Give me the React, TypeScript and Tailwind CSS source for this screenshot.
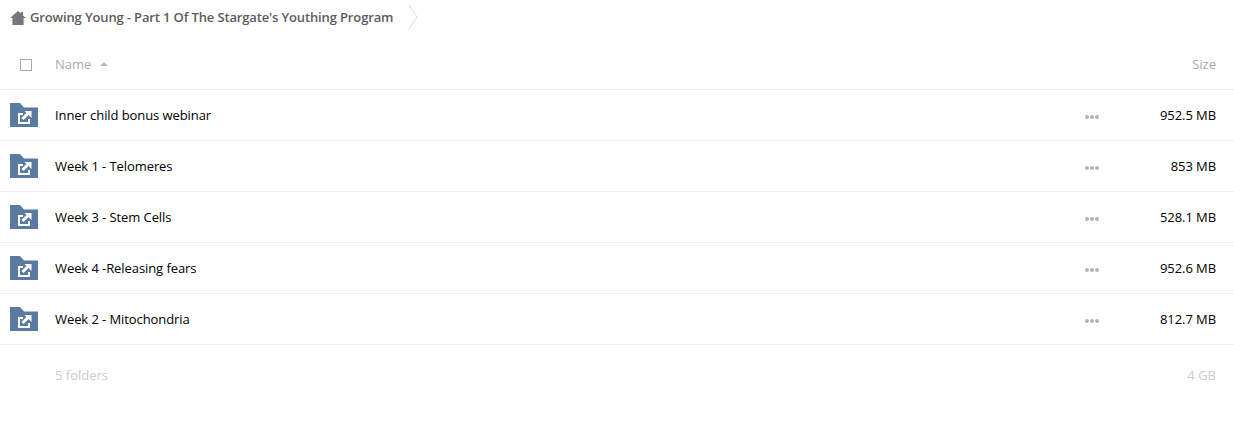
const rows = [
  ["Inner child bonus webinar", "952.5 MB"],
  ["Week 1 - Telomeres", "853 MB"],
  ["Week 3 - Stem Cells", "528.1 MB"],
  ["Week 4 -Releasing fears", "952.6 MB"],
  ["Week 2 - Mitochondria", "812.7 MB"],
];

function Folder() {
  return (
    <svg width="28" height="24" viewBox="0 0 28 24" className="block shrink-0">
      <path d="M0 0H10L14 4.5H28V24H0Z" fill="#5b7aa1" />
      <path d="M13 11H9V20H19V16" fill="none" stroke="#fff" strokeWidth="2" />
      <path d="M12.5 16L18 10.5" stroke="#fff" strokeWidth="3" />
      <path d="M14.5 8H21.5V15Z" fill="#fff" />
    </svg>
  );
}

function Dots() {
  return (
    <svg width="14" height="4" viewBox="0 0 14 4" className="block">
      <circle cx="2" cy="2" r="2" fill="#b3b3b3" />
      <circle cx="7" cy="2" r="2" fill="#b3b3b3" />
      <circle cx="12" cy="2" r="2" fill="#b3b3b3" />
    </svg>
  );
}

export default function App() {
  return (
    <div className="w-[1234px] h-[426px] bg-white font-['Open_Sans',sans-serif] text-[13px] overflow-hidden">
      <div className="h-[35px] flex items-center pl-[10px]">
        <svg width="16" height="14" viewBox="0 0 16 14" className="block shrink-0 mr-1">
          <path d="M8 0L11 2.6V1H13V4.4L16 7H13.6V14H2.4V7H0Z" fill="#777" />
        </svg>
        <span className="font-semibold text-[#5c5c5c] text-[13px] tracking-[-0.14px]">Growing Young - Part 1 Of The Stargate's Youthing Program</span>
        <svg width="10" height="26" viewBox="0 0 10 26" className="block ml-[15px] mt-[-1px]">
          <path d="M1 1L9 13L1 25" fill="none" stroke="#dddddd" strokeWidth="1" />
        </svg>
      </div>
      <div className="h-[55px] flex items-center border-b border-[#eeeeee] pr-[18px] pt-[5px]">
        <div className="w-[55px] pl-5 shrink-0">
          <div className="w-3 h-3 border border-[#aaaaaa]" />
        </div>
        <span className="text-[#aaaaaa]">Name</span>
        <span className="ml-[9px] mb-[1px] border-x-[4px] border-x-transparent border-b-[4px] border-b-[#bbbbbb]" />
        <span className="ml-auto text-[#aaaaaa]">Size</span>
      </div>
      {rows.map(([name, size]) => (
        <div key={name} className="h-[51px] flex items-center border-b border-[#eeeeee] pl-[10px] pr-[18px]">
          <div className="w-[45px] shrink-0"><Folder /></div>
          <span className="text-black pt-[2px] tracking-[-0.08px]">{name}</span>
          <div className="ml-auto mt-[3px] mr-[1px]"><Dots /></div>
          <span className="w-[116px] text-right text-black pt-[2px] tracking-[-0.08px]">{size}</span>
        </div>
      ))}
      <div className="h-[61px] flex items-center pl-[55px] pr-[18px] text-[#cccccc]">
        <span>5 folders</span>
        <span className="ml-auto">4 GB</span>
      </div>
    </div>
  );
}
